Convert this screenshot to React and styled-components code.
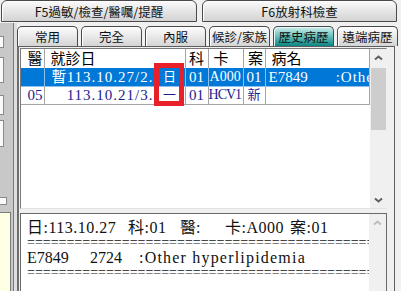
import React from 'react';
import styled, { createGlobalStyle } from 'styled-components';

const SANS = `"Noto Sans CJK TC", "Noto Sans", sans-serif`;
const MING = `"Liberation Serif", "Noto Sans CJK TC", serif`;

const GlobalStyle = createGlobalStyle`
  html, body { margin: 0; padding: 0; background: #f0f0f0; }
  #root { width: 401px; height: 291px; }
`;

const Window = styled.div`
  width: 401px;
  height: 291px;
  overflow: hidden;
  background: #f0f0f0;
  display: flex;
  flex-direction: column;
`;

// top row: F5 / F6
const TopTabs = styled.div`
  display: flex;
  gap: 5px;
  height: 23px;
  padding-left: 1px;
  flex-shrink: 0;
`;

const BigTab = styled.div`
  width: ${p => p.$w}px;
  height: 22px;
  box-sizing: border-box;
  border: 1px solid #4a4a4a;
  border-radius: 6px 6px 0 0;
  background: linear-gradient(#fbfbfb, #e8e8e8 45%, #d3d3d3);
  box-shadow: inset 1px 1px 0 #fff;
  display: flex;
  align-items: center;
  justify-content: center;
  font: 12.5px ${SANS};
  color: #111;
`;

const Body = styled.div`
  flex: 1;
  min-height: 0;
  display: flex;
`;

const LeftStrip = styled.div`
  width: 17px;
  flex-shrink: 0;
  box-sizing: border-box;
  background: #c8c8c8;
  border-right: 3px solid #dedede;
  box-shadow: inset -1px 0 0 #7a7a7a;
  display: flex;
  flex-direction: column;
`;

const StubBox = styled.div`
  width: ${p => p.$w || 3}px;
  height: ${p => p.$h}px;
  margin-top: ${p => p.$mt || 0}px;
  background: ${p => p.$bg || '#fafafa'};
  border: 1px solid #8a8a8a;
  border-left: none;
  flex-shrink: 0;
`;

const YellowPad = styled.div`
  margin-top: auto;
  width: 10px;
  height: 78px;
  background: #ffffe6;
  border-right: 1px solid #7a7a7a;
  border-top: 1px solid #7a7a7a;
`;

const Main = styled.div`
  flex: 1;
  display: flex;
  flex-direction: column;
  min-width: 0;
`;

const SubTabs = styled.div`
  height: 23px;
  flex-shrink: 0;
  display: flex;
  align-items: flex-end;
  gap: 3px;
`;

const SubTab = styled.div`
  width: 61px;
  height: 20px;
  box-sizing: border-box;
  flex-shrink: 0;
  border: 1px solid #4a4a4a;
  border-bottom: none;
  border-radius: 5px 5px 0 0;
  background: ${p => p.$active
    ? 'linear-gradient(#cdeeed, #7cc8c4 40%, #0a8682)'
    : 'linear-gradient(#fdfdfd, #ebebeb 45%, #d4d4d4)'};
  box-shadow: inset 1px 1px 0 ${p => (p.$active ? '#e6f7f6' : '#fff')};
  display: flex;
  align-items: center;
  justify-content: center;
  font: 12.5px ${SANS};
  color: #111;
  white-space: nowrap;
`;

const Panel = styled.div`
  flex: 1;
  min-height: 0;
  margin-right: 6px;
  box-sizing: border-box;
  border: 1px solid #5e5e5e;
  border-left: 2px solid #6e6e6e;
  border-bottom: none;
  padding: 1px 7px 0 1px;
  display: flex;
  flex-direction: column;
  gap: 4px;
`;

const GridBox = styled.div`
  position: relative;
  height: 161px;
  flex-shrink: 0;
  box-sizing: border-box;
  border: 1px solid;
  border-color: #7a7a7a #e3e3e3 #e3e3e3 #7a7a7a;
  background: #fff;
  display: flex;
`;

const GridTable = styled.table`
  width: 348px;
  table-layout: fixed;
  border-collapse: collapse;
  align-self: flex-start;
  font: 15px ${MING};
`;

const Row = styled.tr`
  height: ${p => (p.$head ? 19 : 18)}px;
  background: ${p => (p.$sel ? '#0078d7' : 'transparent')};
  color: ${p => (p.$sel ? '#fff' : p.$head ? '#000' : '#1c1c8e')};
`;

const Cell = styled.td`
  padding: 0 ${p => p.$pr ?? 2}px 0 ${p => p.$pl ?? 2}px;
  text-align: ${p => p.$align || 'left'};
  white-space: nowrap;
  overflow: hidden;
  line-height: 16px;
  letter-spacing: ${p => p.$ls || 0}px;
  font-size: ${p => p.$fs || 15}px;
  border-right: 1px solid ${p => (p.$onSel ? '#8fc0ec' : '#a5a5a5')};
  border-bottom: ${p => (p.$head ? 'none' : `1px solid ${p.$onSel ? '#8fc0ec' : '#a5a5a5'}`)};
  vertical-align: middle;
`;

const Gap = styled.span`
  display: inline-block;
  width: ${p => p.$w}px;
`;

const Spaced = styled.span`
  letter-spacing: 1px;
`;

const RedMark = styled.div`
  position: absolute;
  left: 133px;
  top: 14px;
  width: 30px;
  height: 43px;
  box-sizing: border-box;
  border: 5px solid #e8202a;
  pointer-events: none;
`;

const ScrollBar = styled.div`
  width: 17px;
  flex-shrink: 0;
  background: #f0f0f0;
  display: flex;
  flex-direction: column;
`;

const ScrollBtn = styled.div`
  height: 17px;
  flex-shrink: 0;
  display: flex;
  align-items: center;
  justify-content: center;
  color: ${p => (p.$dim ? '#bdbdbd' : '#5f5f5f')};
`;

const Track = styled.div`
  flex: 1;
  padding: 2px 1px 0;
`;

const Thumb = styled.div`
  height: ${p => p.$h}px;
  background: #cdcdcd;
`;

const TextBox = styled.div`
  flex: 1;
  min-height: 0;
  box-sizing: border-box;
  border: 1px solid #6a6a6a;
  border-bottom: none;
  background: #fff;
  display: flex;
`;

const TextArea = styled.div`
  flex: 1;
  min-width: 0;
  overflow: hidden;
  padding: 6px 0 0 6px;
  font: 16px ${MING};
  line-height: 15px;
  color: #111;
`;

const Line = styled.div`
  display: flex;
  white-space: nowrap;
  height: 15px;
`;

const Field = styled.span`
  flex: 0 0 ${p => (p.$w ? `${p.$w}px` : 'auto')};
  letter-spacing: ${p => p.$ls || 0}px;
`;

const Rule = styled.div`
  white-space: nowrap;
  overflow: hidden;
  height: 15px;
  font-size: 14px;
`;

const Chevron = ({ down }) => (
  <svg width="9" height="6" viewBox="0 0 9 6">
    <polyline
      points={down ? '1,1.5 4.5,4.5 8,1.5' : '1,4.5 4.5,1.5 8,4.5'}
      fill="none"
      stroke="currentColor"
      strokeWidth="2"
    />
  </svg>
);

const subTabs = ['常用', '完全', '內服', '候診/家族', '歷史病歷', '遠端病歷'];

export default function App() {
  return (
    <Window>
      <GlobalStyle />
      <TopTabs>
        <BigTab $w={196}>F5過敏/檢查/醫囑/提醒</BigTab>
        <BigTab $w={195}>F6放射科檢查</BigTab>
      </TopTabs>

      <Body>
        <LeftStrip>
          <StubBox $mt={13} $h={10} />
          <StubBox $mt={9} $h={24} />
          <StubBox $mt={12} $h={18} />
          <StubBox $mt={5} $h={25} />
          <StubBox $mt={50} $h={6} $w={6} />
          <YellowPad />
        </LeftStrip>

        <Main>
          <SubTabs>
            {subTabs.map(t => (
              <SubTab key={t} $active={t === '歷史病歷'}>{t}</SubTab>
            ))}
          </SubTabs>

          <Panel>
            <GridBox>
              <GridTable>
                <colgroup>
                  <col style={{ width: 23 }} />
                  <col style={{ width: 110 }} />
                  <col style={{ width: 31 }} />
                  <col style={{ width: 23 }} />
                  <col style={{ width: 35 }} />
                  <col style={{ width: 22 }} />
                  <col style={{ width: 104 }} />
                </colgroup>
                <tbody>
                  <Row $head>
                    <Cell $head $align="right" $pr={1}>醫</Cell>
                    <Cell $head colSpan={2} $pl={6}>就診日</Cell>
                    <Cell $head $align="center" $pl={0} $pr={0}>科</Cell>
                    <Cell $head $pl={5}>卡</Cell>
                    <Cell $head $align="center" $pl={3} $pr={0}>案</Cell>
                    <Cell $head $pl={6}>病名</Cell>
                  </Row>
                  <Row $sel>
                    <Cell $onSel />
                    <Cell $onSel $align="right" $pr={0}>
                      暫<Spaced>113.10.27/2.</Spaced>
                    </Cell>
                    <Cell $onSel $align="center" $fs={13} $pl={0} $pr={0}>日</Cell>
                    <Cell $onSel $align="center" $pl={0} $pr={0}>01</Cell>
                    <Cell $onSel $pl={1} $pr={0} $fs={14}>A000</Cell>
                    <Cell $onSel $align="center" $pl={0} $pr={0}>01</Cell>
                    <Cell $onSel $pl={3} $pr={0}>
                      E7849<Gap $w={28} /><Spaced>:Other hyperlipidemia</Spaced>
                    </Cell>
                  </Row>
                  <Row>
                    <Cell $align="right" $pr={1}>05</Cell>
                    <Cell $align="right" $pr={0}>
                      <Spaced>113.10.21/3.</Spaced>
                    </Cell>
                    <Cell $align="center" $fs={13} $pl={0} $pr={0}>一</Cell>
                    <Cell $align="center" $pl={0} $pr={0}>01</Cell>
                    <Cell $pl={0} $pr={0} $fs={14} $ls={-1}>HCV1</Cell>
                    <Cell $align="center" $fs={13} $pl={0} $pr={0}>新</Cell>
                    <Cell />
                  </Row>
                </tbody>
              </GridTable>
              <ScrollBar style={{ marginLeft: 'auto' }}>
                <ScrollBtn><Chevron /></ScrollBtn>
                <Track><Thumb $h={62} /></Track>
                <ScrollBtn><Chevron down /></ScrollBtn>
              </ScrollBar>
              <RedMark />
            </GridBox>

            <TextBox>
              <TextArea>
                <Line>
                  <Field $w={101} $ls={0.5}>日:113.10.27</Field>
                  <Field $w={52} $ls={0.5}>科:01</Field>
                  <Field $w={45}>醫:</Field>
                  <Field $w={65} $ls={0.5}>卡:A000</Field>
                  <Field $ls={0.5}>案:01</Field>
                </Line>
                <Rule>{'='.repeat(45)}</Rule>
                <Line>
                  <Field $w={63}>E7849</Field>
                  <Field $w={49}>2724</Field>
                  <Field $ls={1.2}>:Other hyperlipidemia</Field>
                </Line>
                <Rule>{'='.repeat(45)}</Rule>
              </TextArea>
              <ScrollBar>
                <ScrollBtn $dim><Chevron /></ScrollBtn>
              </ScrollBar>
            </TextBox>
          </Panel>
        </Main>
      </Body>
    </Window>
  );
}
